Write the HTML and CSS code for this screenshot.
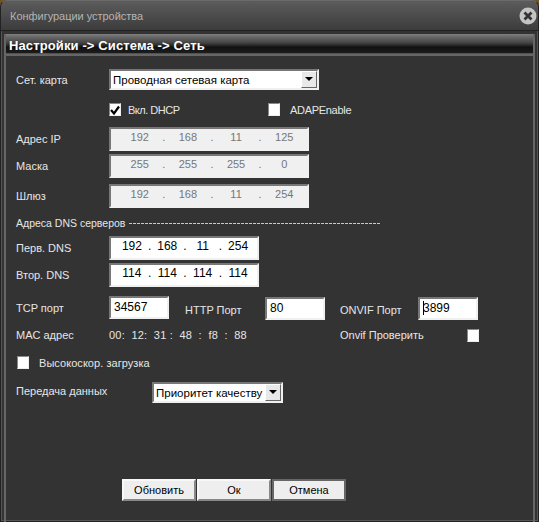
FILE: index.html
```html
<!DOCTYPE html>
<html lang="ru">
  <head>
    <meta charset="UTF-8" />
    <meta name="viewport" content="width=device-width, initial-scale=1.0" />
    <title>Конфигурации устройства</title>
    <link rel="stylesheet" href="styles.css">
  </head>
  <body>
    <div class="window">
      <div class="titlebar">
        <span class="title">Конфигурации устройства</span>
        <span class="close">
          <svg width="18" height="18" viewBox="0 0 18 18">
            <circle cx="9" cy="9" r="8.5" fill="#c4c4c4" />
            <path d="M5.5 5.5 L12.5 12.5 M12.5 5.5 L5.5 12.5" stroke="#333" stroke-width="2.8" />
          </svg>
        </span>
      </div>
      <div class="panel">
        <h1 class="crumbs">Настройки -&gt; Система -&gt; Сеть</h1>

        <div class="form">
          <div class="row row-card">
            <label class="label">Сет. карта</label>
            <div class="select select-card">
              <span class="select-text">Проводная сетевая карта</span>
              <span class="arrow"></span>
            </div>
          </div>

          <div class="row row-dhcp">
            <span class="check checked">
              <svg width="10" height="10" viewBox="0 0 10 10">
                <path d="M1 5 L4 8.5 L9 1.5" fill="none" stroke="#000" stroke-width="2.2" />
              </svg>
            </span>
            <span class="check-text dhcp-text">Вкл. DHCP</span>
            <span class="check"></span>
            <span class="check-text adap-text">ADAPEnable</span>
          </div>

          <div class="row row-ip">
            <label class="label">Адрес IP</label>
            <div class="ip ip-off">
              <span>192</span><i>.</i><span>168</span><i>.</i><span>11</span><i>.</i><span>125</span>
            </div>
          </div>
          <div class="row row-mask">
            <label class="label">Маска</label>
            <div class="ip ip-off">
              <span>255</span><i>.</i><span>255</span><i>.</i><span>255</span><i>.</i><span>0</span>
            </div>
          </div>
          <div class="row row-gate">
            <label class="label">Шлюз</label>
            <div class="ip ip-off">
              <span>192</span><i>.</i><span>168</span><i>.</i><span>11</span><i>.</i><span>254</span>
            </div>
          </div>

          <div class="dns-title">
            <span>Адреса DNS серверов</span>
            <span class="dashes"></span>
          </div>

          <div class="row row-dns1">
            <label class="label">Перв. DNS</label>
            <div class="ip ip-on">
              <span>192</span><i>.</i><span>168</span><i>.</i><span>11</span><i>.</i><span>254</span>
            </div>
          </div>
          <div class="row row-dns2">
            <label class="label">Втор. DNS</label>
            <div class="ip ip-on">
              <span>114</span><i>.</i><span>114</span><i>.</i><span>114</span><i>.</i><span>114</span>
            </div>
          </div>

          <div class="row row-ports">
            <label class="label">TCP порт</label>
            <div class="port">34567</div>
            <label class="port-label http-label">HTTP Порт</label>
            <div class="port port-low">80</div>
            <label class="port-label onvif-label">ONVIF Порт</label>
            <div class="port port-low"><b class="caret"></b>3899</div>
          </div>

          <div class="row row-mac">
            <label class="label">MAC адрес</label>
            <span class="mac">00:&nbsp; 12:&nbsp; 31 :&nbsp; 48&nbsp; :&nbsp; f8&nbsp; :&nbsp; 88</span>
            <span class="check-text onvif-check">Onvif Проверить</span>
            <span class="check"></span>
          </div>

          <div class="row row-speed">
            <span class="check"></span>
            <span class="check-text speed-text">Высокоскор. загрузка</span>
          </div>

          <div class="row row-data">
            <label class="label label-data">Передача данных</label>
            <div class="select select-data">
              <span class="select-text">Приоритет качеству</span>
              <span class="arrow"></span>
            </div>
          </div>

          <div class="buttons">
            <button class="btn">Обновить</button>
            <button class="btn">Ок</button>
            <button class="btn btn-focus">Отмена</button>
          </div>
        </div>
      </div>
    </div>
  </body>
</html>
```

FILE: styles.css
```css
html,
body {
  margin: 0;
  height: 100%;
  overflow: hidden;
}
body {
  background-color: #6e5228;
  font-family: "Liberation Sans", Arial, sans-serif;
  font-size: 11px;
  color: #e6e6e6;
}
.window {
  height: 522px;
  box-sizing: border-box;
  background: #333;
  border-top: 1px solid #6a6a6a;
  border-left: 1px solid #222;
  border-right: 1px solid #222;
  border-bottom: 1px solid #222;
  border-radius: 7px 7px 0 0;
  box-shadow: inset 1px 0 #555, inset -1px 0 #555, inset 0 -1px #555;
}
.titlebar {
  height: 29px;
  display: flex;
  align-items: center;
  justify-content: space-between;
  padding: 0 1px 0 9px;
  background: linear-gradient(#5c5c5c, #3c3c3c);
  border-bottom: 1px solid #222;
  border-radius: 6px 6px 0 0;
}
.title {
  color: #b4b4b4;
  font-size: 11px;
  letter-spacing: -0.03px;
}
.close {
  display: flex;
  margin-top: 1px;
}
.panel {
  height: 488px;
  margin: 3px 3px 0 3px;
  border-left: 2px solid #666;
  border-right: 2px solid #666;
}
.crumbs {
  margin: 0;
  height: 22px;
  line-height: 23px;
  padding-left: 3px;
  font-size: 13px;
  font-weight: bold;
  letter-spacing: 0.12px;
  color: #fff;
  background: linear-gradient(#7e7e7e 0, #6a6a6a 12%, #444 40%, #111 60%, #1c1c1c 85%, #666 90%, #666 100%);
}
.form {
  position: relative;
  margin-left: -6px;
  padding-left: 16px;
  font-size: 11px;
}
.row {
  display: flex;
  align-items: center;
}
.label {
  width: 93px;
  flex: none;
}
.row-card {
  height: 21px;
  margin-top: 13px;
}
.select {
  box-sizing: border-box;
  display: flex;
  align-items: center;
  justify-content: space-between;
  background: #fff;
  border: 2px solid;
  border-color: #777 #f0f0f0 #f0f0f0 #777;
  color: #000;
  padding-left: 2px;
  white-space: nowrap;
}
.select-card {
  width: 210px;
  height: 21px;
  font-size: 11.5px;
}
.select-data {
  width: 131px;
  height: 21px;
  font-size: 11.5px;
}
.arrow {
  width: 16px;
  height: 17px;
  flex: none;
  box-sizing: border-box;
  position: relative;
  background: #e8e8e8;
  border: 1px solid;
  border-color: #fff #666 #666 #fff;
}
.arrow::after {
  content: "";
  position: absolute;
  left: 3px;
  top: 5px;
  border: 4px solid transparent;
  border-top: 4px solid #000;
  border-bottom: none;
}
.check {
  box-sizing: border-box;
  width: 12px;
  height: 13px;
  flex: none;
  display: flex;
  align-items: center;
  justify-content: center;
  background: #fff;
  border: 1px solid;
  border-color: #888 #eee #eee #888;
}
.check-text {
  margin-left: 7px;
}
.row-dhcp {
  height: 13px;
  margin-top: 13px;
  padding-left: 93px;
}
.dhcp-text {
  width: 140px;
  letter-spacing: -0.5px;
}
.adap-text {
  margin-left: 10px;
  letter-spacing: -0.3px;
}
.row-ip {
  height: 24px;
  margin-top: 11px;
}
.row-mask {
  height: 24px;
  margin-top: 3px;
}
.row-gate {
  height: 24px;
  margin-top: 6px;
}
.ip {
  box-sizing: border-box;
  height: 24px;
  display: flex;
  align-items: center;
  border: 2px solid;
  border-color: #777 #f0f0f0 #f0f0f0 #777;
}
.ip span {
  text-align: center;
}
.ip i {
  font-style: normal;
  text-align: center;
}
.ip-off {
  width: 200px;
  padding: 0 10px 4px 16px;
  background: #f0f0f0;
  color: #777;
}
.ip-off span {
  width: 26px;
}
.ip-off i {
  width: 23px;
}
.ip-on {
  width: 150px;
  padding: 0 8px 4px 10px;
  background: #fff;
  color: #000;
  font-size: 12px;
}
.ip-on span {
  width: 24px;
}
.ip-on i {
  width: 15px;
}
.dns-title {
  height: 14px;
  margin-top: 8px;
  display: flex;
  align-items: center;
  font-size: 10.5px;
}
.dashes {
  width: 252px;
  height: 1px;
  margin-left: 4px;
  background: repeating-linear-gradient(90deg, #c8c8c8 0 3px, transparent 3px 4px);
}
.row-dns1 {
  height: 24px;
  margin-top: 6px;
}
.row-dns2 {
  height: 24px;
  margin-top: 3px;
}
.row-ports {
  height: 24px;
  margin-top: 9px;
  align-items: flex-start;
}
.row-ports .label,
.port-label {
  line-height: 24px;
}
.port {
  box-sizing: border-box;
  position: relative;
  width: 60px;
  height: 23px;
  flex: none;
  padding: 2px 3px;
  background: #fff;
  border: 2px solid;
  border-color: #777 #f0f0f0 #f0f0f0 #777;
  color: #000;
  font-size: 12px;
}
.port-low {
  margin-top: 1px;
}
.port-label {
  margin-top: 2px;
  flex: none;
}
.http-label {
  width: 80px;
  margin-left: 16px;
}
.onvif-label {
  width: 78px;
  margin-left: 15px;
}
.caret {
  position: absolute;
  left: 3px;
  top: 2px;
  height: 14px;
  border-left: 1px solid #000;
}
.row-mac {
  height: 16px;
  margin-top: 7px;
}
.mac {
  width: 231px;
  flex: none;
  letter-spacing: 0.2px;
}
.onvif-check {
  width: 127px;
  margin-left: 0;
  flex: none;
}
.row-speed {
  height: 13px;
  margin-top: 13px;
  padding-left: 1px;
}
.speed-text {
  margin-left: 10px;
  letter-spacing: 0.05px;
}
.row-data {
  height: 21px;
  margin-top: 13px;
}
.label-data {
  width: 136px;
  margin-top: -4px;
}
.buttons {
  display: flex;
  gap: 1px;
  margin-top: 76px;
  padding-left: 106px;
}
.btn {
  box-sizing: border-box;
  width: 74px;
  height: 22px;
  padding: 0;
  background: #eee;
  border: 2px solid;
  border-color: #f8f8f8 #888 #888 #f8f8f8;
  color: #000;
  font-family: inherit;
  font-size: 11px;
}
.btn-focus {
  border-color: #666;
}
```
